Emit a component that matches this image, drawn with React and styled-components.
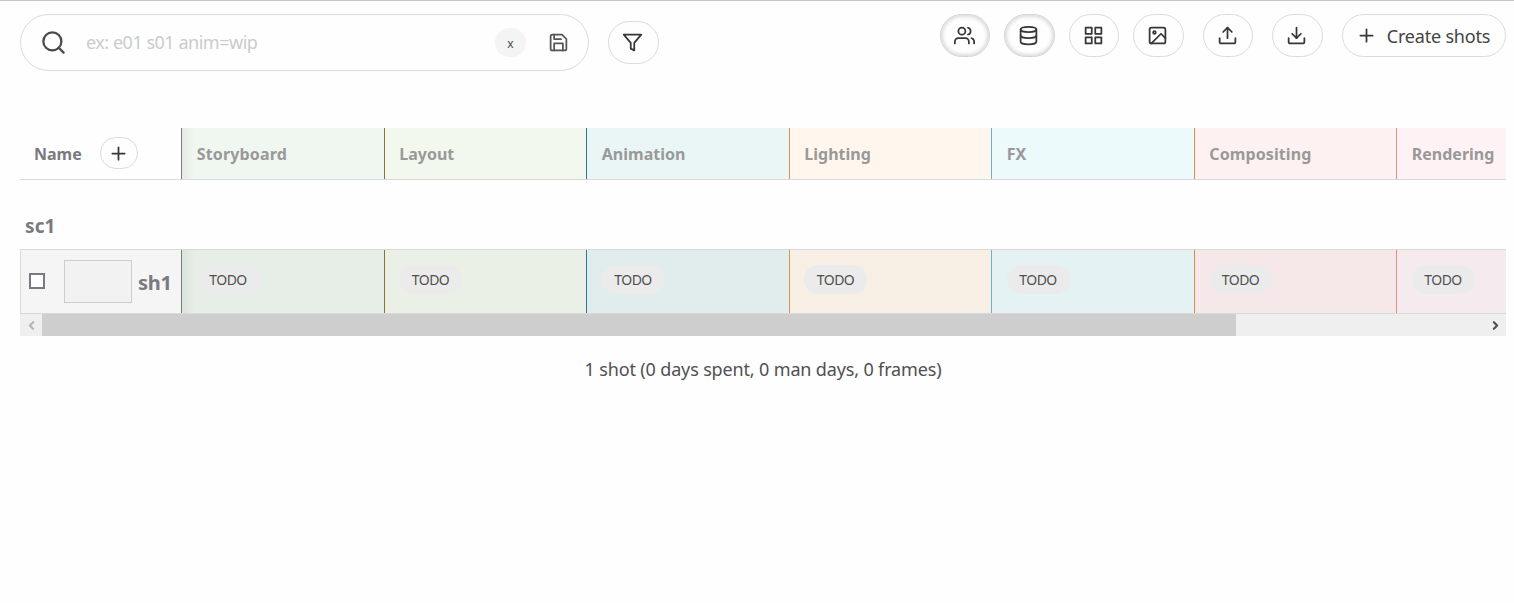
import React from 'react';
import styled, { createGlobalStyle, css } from 'styled-components';
import { ChevronLeft, ChevronRight } from 'lucide-react';
import { FiSearch, FiSave, FiFilter, FiUsers, FiDatabase, FiGrid, FiImage, FiUpload, FiDownload, FiPlus } from 'react-icons/fi';

const GlobalStyle = createGlobalStyle`
  * { box-sizing: border-box; }
  body {
    margin: 0;
    background: #fefefe;
    color: #505050;
    font-family: "Noto Sans", "Open Sans", sans-serif;
  }
`;

const Page = styled.main`
  height: 603px;
  overflow: hidden;
  border-top: 1px solid #c8c8c8;
  padding: 13px 8px 0 20px;
`;

const Toolbar = styled.header`
  display: flex;
  align-items: flex-start;
  height: 114px;
`;

const SearchField = styled.div`
  display: flex;
  align-items: center;
  width: 569px;
  height: 57px;
  padding: 0 19px;
  border: 1px solid #dbdbdb;
  border-radius: 29px;
  margin-right: 19px;
`;

const Placeholder = styled.span`
  flex: 1;
  margin-left: 19px;
  padding-bottom: 2px;
  font-size: 18px;
  letter-spacing: -0.48px;
  color: #c9cdc9;
`;

const ClearButton = styled.button`
  width: 31px;
  height: 29px;
  margin-right: 22px;
  padding: 2px 0 0;
  border: 0;
  border-radius: 15px;
  background: #f4f4f4;
  color: #4a4a4a;
  font: 12px "Noto Sans", sans-serif;
`;

const PillButton = styled.button`
  display: flex;
  align-items: center;
  justify-content: center;
  width: ${({ $width = 51 }) => $width}px;
  height: 43px;
  margin: ${({ $top = 0 }) => $top}px 0 0 ${({ $gap = 0 }) => $gap}px;
  padding: 0 2px 0 0;
  border: 1px solid #dbdbdb;
  border-radius: 22px;
  background: #fefefe;
  color: #363636;
  ${({ $active }) => $active && css`
    border-color: #d4d4d4;
    box-shadow: inset 0 0 4px 1px #cecece;
  `}
`;

const Actions = styled.div`
  display: flex;
  margin-left: auto;
`;

const ButtonLabel = styled.span`
  margin-left: 10px;
  font: 18px "Noto Sans", sans-serif;
  letter-spacing: -0.2px;
  color: #444;
`;

const Table = styled.section`
  overflow: hidden;
`;

const columns = `161px repeat(6, 202.5px) 110px`;

const HeaderRow = styled.div`
  display: grid;
  grid-template-columns: ${columns};
  height: 52px;
  border-bottom: 1px solid #d9d9d9;
`;

const NameHeader = styled.div`
  display: flex;
  align-items: center;
  padding-left: 14px;
  font-size: 16px;
  font-weight: 700;
  color: #7a7a80;
`;

const AddColumn = styled.button`
  display: flex;
  align-items: center;
  justify-content: center;
  width: 38px;
  height: 32px;
  margin: -1px 0 0 18px;
  padding: 0;
  border: 1px solid #dbdbdb;
  border-radius: 16px;
  background: #fefefe;
  color: #363636;
`;

const TaskCell = styled.div`
  display: flex;
  padding-left: 14.8px;
  border-left: 1px solid ${({ $line }) => $line};
  background: ${({ $shade }) => $shade && 'linear-gradient(90deg, rgba(90,90,90,.08), transparent 12px), '}${({ $fill }) => $fill};
`;

const TaskHeader = styled(TaskCell)`
  align-items: center;
  font-size: 16px;
  font-weight: 700;
  color: #999;
`;

const HeaderText = styled.span`
  letter-spacing: ${({ $spacing = 0 }) => $spacing}px;
`;

const SceneTitle = styled.h2`
  height: 69px;
  margin: 0;
  padding: 33px 0 0 5px;
  font-size: 19px;
  line-height: 26px;
  letter-spacing: 0.1px;
  color: #7a7a80;
`;

const ShotRow = styled.div`
  display: grid;
  grid-template-columns: ${columns};
  height: 65px;
  border: solid #d9d9d9;
  border-width: 1px 0;
`;

const ShotName = styled.div`
  display: flex;
  align-items: center;
  padding-left: 8px;
  border-left: 1px solid #d9d9d9;
  background: #f5f5f5;
  color: #7a7a80;
  font-size: 20px;
  font-weight: 700;
`;

const ShotLabel = styled.span`
  padding-top: 2px;
  letter-spacing: -0.3px;
`;

const Checkbox = styled.span`
  width: 16px;
  height: 16px;
  margin-bottom: 1px;
  border: 2px solid #7a7a85;
  background: #fff;
`;

const Thumbnail = styled.span`
  width: 68px;
  height: 43px;
  margin: 0 6px 0 19px;
  border: 1px solid #ccc;
  background: #f2f2f2;
`;

const Status = styled.span`
  display: flex;
  align-items: center;
  justify-content: center;
  width: 63px;
  height: 29px;
  margin-top: 15px;
  margin-left: -0.3px;
  border-radius: 15px;
  background: #ebebeb;
  color: #505050;
  font-size: 14px;
  letter-spacing: -0.5px;
`;

const Scrollbar = styled.div`
  display: flex;
  align-items: center;
  justify-content: space-between;
  height: 22px;
  background: #efefef;
`;

const ScrollArrow = styled.span`
  display: flex;
  align-items: center;
  justify-content: center;
  width: 22px;
  color: ${({ $dim }) => ($dim ? '#b5b5b5' : '#505050')};
`;

const ScrollThumb = styled.div`
  width: 1194px;
  height: 22px;
  margin-right: auto;
  background: #cdcecd;
`;

const Summary = styled.p`
  margin: 20px 0 0;
  text-align: center;
  font-size: 18px;
  line-height: 26px;
  letter-spacing: -0.15px;
`;

const tasks = [
  { name: 'Storyboard', line: '#7a8078', head: '#f0f6f0', body: '#e7eee7', spacing: 0.15 },
  { name: 'Layout', line: '#8b7340', head: '#f3f8ee', body: '#ebf0e6' },
  { name: 'Animation', line: '#2b76a5', head: '#eaf6f6', body: '#e1edec' },
  { name: 'Lighting', line: '#dd9158', head: '#fff7ee', body: '#f7efe4' },
  { name: 'FX', line: '#70b0cc', head: '#ecfafc', body: '#e4f2f3' },
  { name: 'Compositing', line: '#df8d4f', head: '#fdf1f1', body: '#f6e8e8', spacing: 0.1 },
  { name: 'Rendering', line: '#dc9484', head: '#fef2f4', body: '#f5eaed' },
];

export default function App() {
  return (
    <Page>
      <GlobalStyle />
      <Toolbar>
        <SearchField>
          <FiSearch size={27} color="#4a4a4a" />
          <Placeholder>ex: e01 s01 anim=wip</Placeholder>
          <ClearButton>x</ClearButton>
          <FiSave size={21} color="#555" />
        </SearchField>
        <PillButton $top={7}><FiFilter size={21} /></PillButton>
        <Actions>
          <PillButton $width={50} $active><FiUsers size={21} /></PillButton>
          <PillButton $gap={14} $active><FiDatabase size={21} /></PillButton>
          <PillButton $width={50} $gap={14}><FiGrid size={21} /></PillButton>
          <PillButton $gap={14}><FiImage size={21} /></PillButton>
          <PillButton $width={50} $gap={19}><FiUpload size={21} /></PillButton>
          <PillButton $gap={19}><FiDownload size={21} /></PillButton>
          <PillButton $width={164} $gap={19}><FiPlus size={21} /><ButtonLabel>Create shots</ButtonLabel></PillButton>
        </Actions>
      </Toolbar>
      <Table>
        <HeaderRow>
          <NameHeader>Name<AddColumn><FiPlus size={21} /></AddColumn></NameHeader>
          {tasks.map((t, i) => (
            <TaskHeader key={t.name} $line={t.line} $fill={t.head} $shade={i === 0}>
              <HeaderText $spacing={t.spacing}>{t.name}</HeaderText>
            </TaskHeader>
          ))}
        </HeaderRow>
        <SceneTitle>sc1</SceneTitle>
        <ShotRow>
          <ShotName><Checkbox /><Thumbnail /><ShotLabel>sh1</ShotLabel></ShotName>
          {tasks.map((t, i) => (
            <TaskCell key={t.name} $line={t.line} $fill={t.body} $shade={i === 0}>
              <Status>TODO</Status>
            </TaskCell>
          ))}
        </ShotRow>
        <Scrollbar>
          <ScrollArrow $dim><ChevronLeft size={13} strokeWidth={4} /></ScrollArrow>
          <ScrollThumb />
          <ScrollArrow><ChevronRight size={13} strokeWidth={4} /></ScrollArrow>
        </Scrollbar>
      </Table>
      <Summary>1 shot (0 days spent, 0 man days, 0 frames)</Summary>
    </Page>
  );
}
